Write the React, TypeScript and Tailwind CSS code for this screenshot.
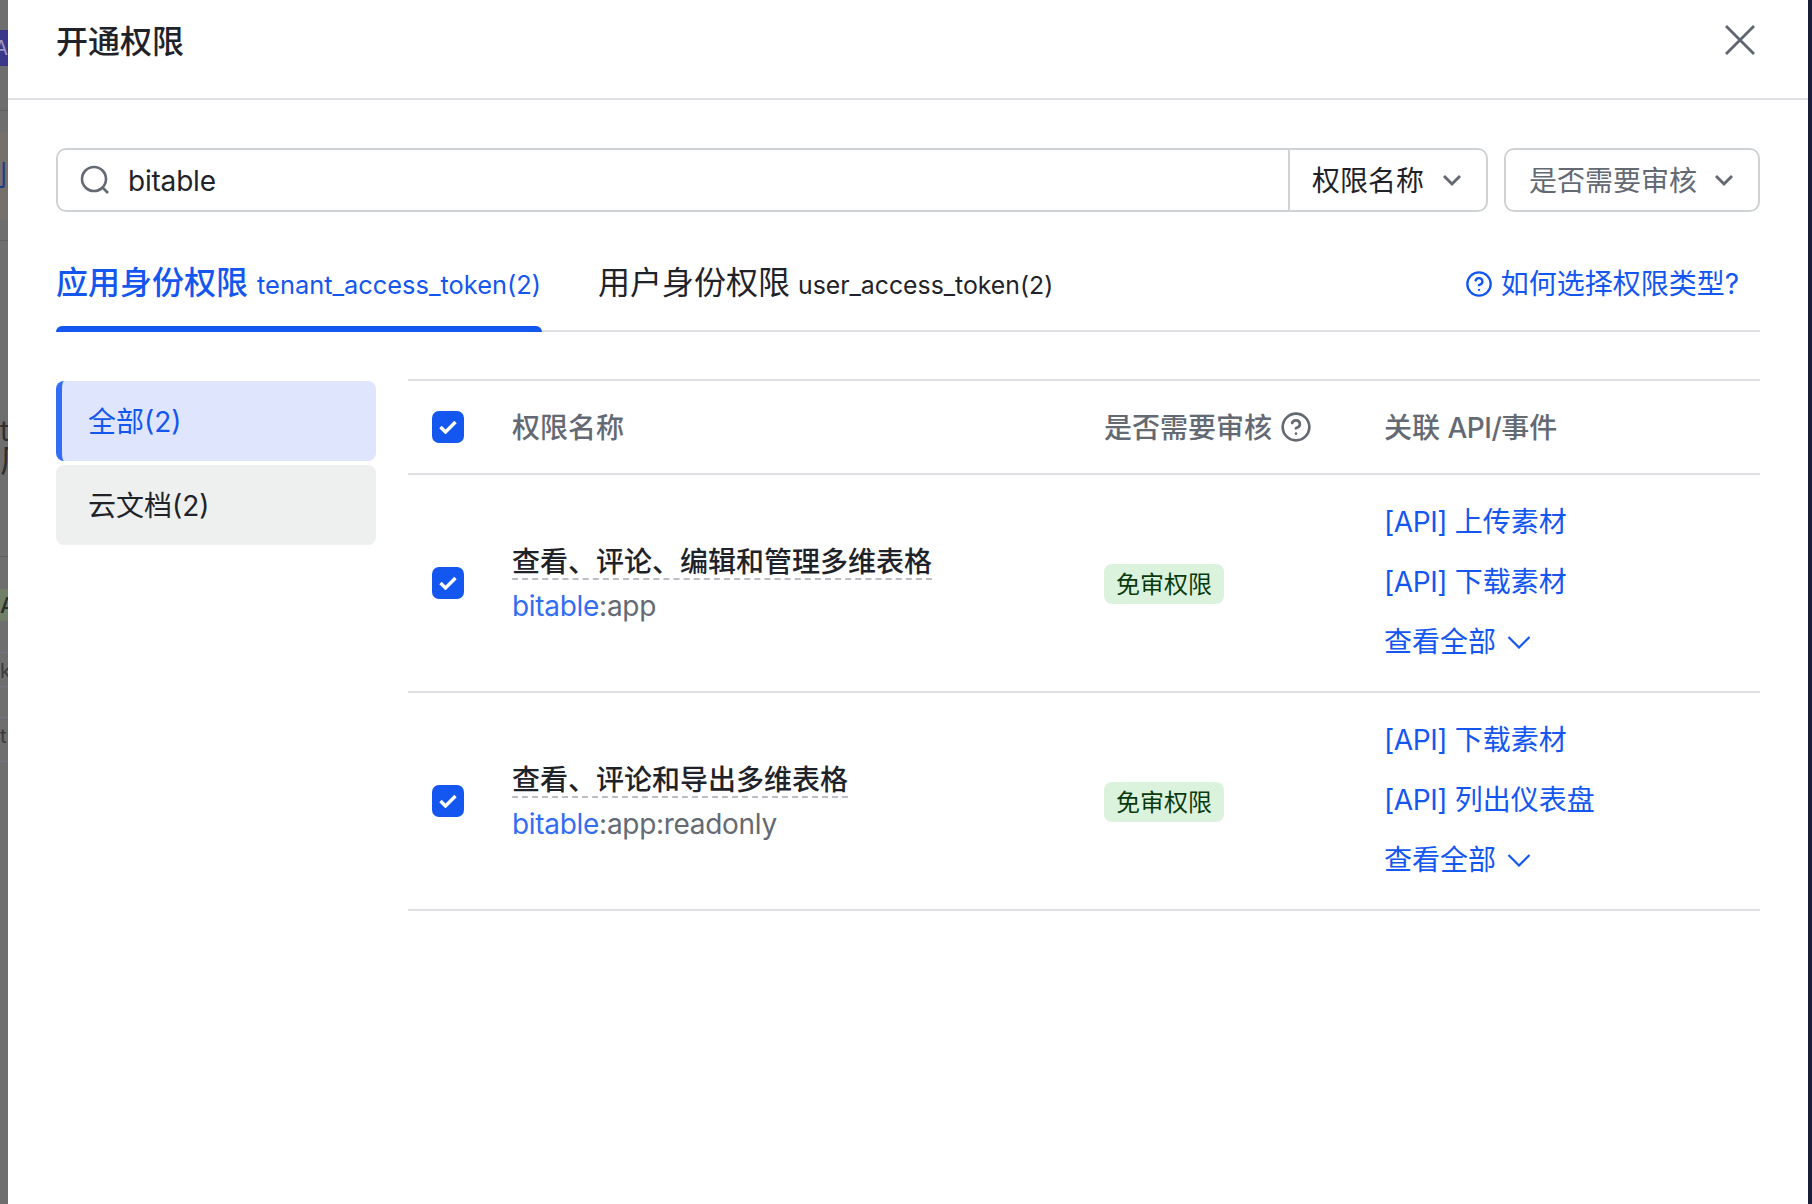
import { CircleHelp } from "lucide-react";

const font = `font-['Inter','Noto_Sans_CJK_SC',sans-serif]`;

const Chevron = ({ className }: { className: string }) => (
  <svg viewBox="0 0 20 14" fill="none" stroke="currentColor" strokeWidth="3" className={className}>
    <path d="M2 3l8 8 8-8" />
  </svg>
);

const Check = () => (
  <div className="flex h-8 w-8 items-center justify-center rounded-[7px] bg-[#1456f0]">
    <svg viewBox="0 0 18 14" className="h-[14px] w-[18px]" fill="none" stroke="#fff" strokeWidth="3.4">
      <path d="M1.5 7l5 5 10-10" />
    </svg>
  </div>
);

const rows = [
  {
    title: "查看、评论、编辑和管理多维表格",
    scope: ":app",
    apis: ["上传素材", "下载素材"],
  },
  {
    title: "查看、评论和导出多维表格",
    scope: ":app:readonly",
    apis: ["下载素材", "列出仪表盘"],
  },
];

const App = () => {
  return (
    <div className={`flex h-screen overflow-hidden bg-white ${font}`}>
      {/* dimmed page behind the drawer */}
      <div className="flex w-2 shrink-0 flex-col overflow-hidden bg-[#6e6e6e] leading-none text-[#2f2f2f]">
        <div className="mt-[30px] flex h-9 items-center justify-end bg-[#3b3889] text-[20px] text-[#9a97c0]">A</div>
        <div className="mt-[44px] h-px bg-[#5f5f5f]" />
        <div className="mt-[21px] flex h-[88px] items-center justify-end whitespace-nowrap bg-[#75716a] text-[28px] text-[#1f3a8a]">刂</div>
        <div className="mt-[20px] h-px bg-[#606060]" />
        <div className="mt-[176px] h-7 text-[28px]">t</div>
        <div className="h-8 text-[32px]">厂</div>
        <div className="mt-[79px] h-px bg-[#606060]" />
        <div className="mt-[32px] flex h-8 items-center whitespace-nowrap bg-[#6f8066] text-[22px] font-medium">AP</div>
        <div className="mt-[31px] h-px bg-[#70748a]" />
        <div className="mt-2 h-5 text-[20px] text-[#3a3a3a]">k</div>
        <div className="mt-[5px] h-px bg-[#70748a]" />
        <div className="mt-[30px] h-px bg-[#70748a]" />
        <div className="mt-2 h-5 text-[20px] text-[#3a3a3a]">t</div>
        <div className="mt-[15px] h-px bg-[#70748a]" />
      </div>

      <div className="flex min-w-0 flex-1 flex-col">
        {/* Header */}
        <div className="flex h-[100px] shrink-0 items-center justify-between border-b-2 border-[#dee0e3] pb-[14px] pl-12 pr-[53px]">
          <h1 className="text-[32px] font-medium leading-none text-[#1f2329]">开通权限</h1>
          <svg viewBox="0 0 30 30" className="h-[30px] w-[30px] -translate-y-[2px] text-[#5f6570]" fill="none" stroke="currentColor" strokeWidth="2.8">
            <path d="M1 1l28 28M29 1L1 29" />
          </svg>
        </div>

        <div className="flex flex-col px-12 pt-12">
          {/* Search */}
          <div className="flex h-16 gap-4">
            <div className="flex flex-1 rounded-[10px] border-2 border-[#d0d3d6]">
              <div className="flex flex-1 items-center pl-[22px] text-[28px] text-[#1f2329]">
                <svg viewBox="0 0 30 30" className="h-[30px] w-[30px] text-[#646a73]" fill="none" stroke="currentColor" strokeWidth="2.6">
                  <circle cx="14" cy="14" r="12" />
                  <path d="M23 23l5 5" />
                </svg>
                <span className="ml-[18px] pt-[2px] tracking-[-0.2px]">bitable</span>
              </div>
              <div className="flex w-[198px] items-center border-l-2 border-[#d0d3d6] pl-[22px] text-[28px] text-[#1f2329]">
                <span className="pt-[2px]">权限名称</span>
                <Chevron className="ml-[18px] h-[14px] w-5 text-[#646a73]" />
              </div>
            </div>
            <div className="flex w-[256px] items-center rounded-[10px] border-2 border-[#d0d3d6] pl-[23px] text-[28px] text-[#646a73]">
              <span className="pt-[2px]">是否需要审核</span>
              <Chevron className="ml-[17px] h-[14px] w-5 text-[#646a73]" />
            </div>
          </div>

          {/* Tabs */}
          <div className="flex h-[119.5px] items-stretch border-b-2 border-[#dee0e3]">
            <div className="relative flex w-[486px] items-center gap-[9px] pt-[24px] text-[#1456f0]">
              <span className="text-[32px] font-medium">应用身份权限</span>
              <span className="pt-[5px] text-[25.4px]">tenant_access_token(2)</span>
              <div className="absolute -bottom-[2px] left-0 right-0 h-[6px] rounded-t-[6px] bg-[#1456f0]" />
            </div>
            <div className="ml-[56px] flex items-center gap-[8px] pt-[24px] text-[#1f2329]">
              <span className="text-[32px]">用户身份权限</span>
              <span className="pt-[5px] text-[24.8px]">user_access_token(2)</span>
            </div>
            <div className="ml-auto mr-[21px] flex items-center gap-[9px] pt-[26px] text-[28px] text-[#1456f0]">
              <CircleHelp className="h-[28px] w-[28px] translate-x-px" strokeWidth={2} />
              如何选择权限类型?
            </div>
          </div>

          <div className="mt-[47px] flex items-start gap-8">
            {/* Sidebar */}
            <div className="flex w-[320px] shrink-0 flex-col gap-1 pt-[2px] text-[28px]">
              <div className="flex h-20 items-center rounded-lg border-l-[6px] border-[#336df4] bg-[#dee5fc] pl-[26px] pt-[2px] text-[#1456f0]">全部(2)</div>
              <div className="flex h-20 items-center rounded-lg bg-[#eeefef] pl-8 pt-[2px] text-[#1f2329]">云文档(2)</div>
            </div>

            {/* Table */}
            <div className="flex flex-1 flex-col border-t-2 border-[#dee0e3] text-[28px]">
              <div className="flex h-[94px] items-center border-b-2 border-[#dee0e3] font-medium text-[#646a73]">
                <div className="w-[104px] pl-6"><Check /></div>
                <div className="w-[592px] pt-[2px]">权限名称</div>
                <div className="flex w-[280px] items-center gap-2">
                  <span className="pt-[2px]">是否需要审核</span>
                  <CircleHelp className="h-8 w-8" strokeWidth={2} />
                </div>
                <div className="pt-[2px]">关联 <span className="tracking-[-0.5px]">API/</span>事件</div>
              </div>
              {rows.map(row => (
                <div key={row.scope} className="flex h-[218px] items-center border-b-2 border-[#dee0e3]">
                  <div className="w-[104px] pl-6"><Check /></div>
                  <div className="flex w-[592px] flex-col items-start pt-[4px]">
                    <div className="border-b-2 border-dashed border-[#bbbfc4] font-medium leading-[32px] text-[#1f2329]">{row.title}</div>
                    <div className="mt-[8px] leading-[36px] tracking-[-0.3px] text-[#646a73]">
                      <span className="text-[#336df4]">bitable</span>{row.scope}
                    </div>
                  </div>
                  <div className="w-[280px]">
                    <span className="inline-flex h-10 w-[120px] items-center justify-center rounded-lg bg-[#dbf3dd] pt-[2px] text-2xl text-[#0a3a0e]">免审权限</span>
                  </div>
                  <div className="flex -translate-y-px flex-col gap-[18px] leading-[42px] text-[#1456f0]">
                    {row.apis.map(api => (
                      <div key={api}>
                        <span className="tracking-[-0.4px]">[API] </span>{api}
                      </div>
                    ))}
                    <div className="flex items-center gap-[11px]">
                      查看全部
                      <svg viewBox="0 0 24 14" className="h-[14px] w-6" fill="none" stroke="currentColor" strokeWidth="2.2">
                        <path d="M1.5 2l10.5 10.5L22.5 2" />
                      </svg>
                    </div>
                  </div>
                </div>
              ))}
            </div>
          </div>
        </div>
      </div>

      <div className="w-1 shrink-0 bg-[#1a1c3a]" />
    </div>
  );
};

export default App;
